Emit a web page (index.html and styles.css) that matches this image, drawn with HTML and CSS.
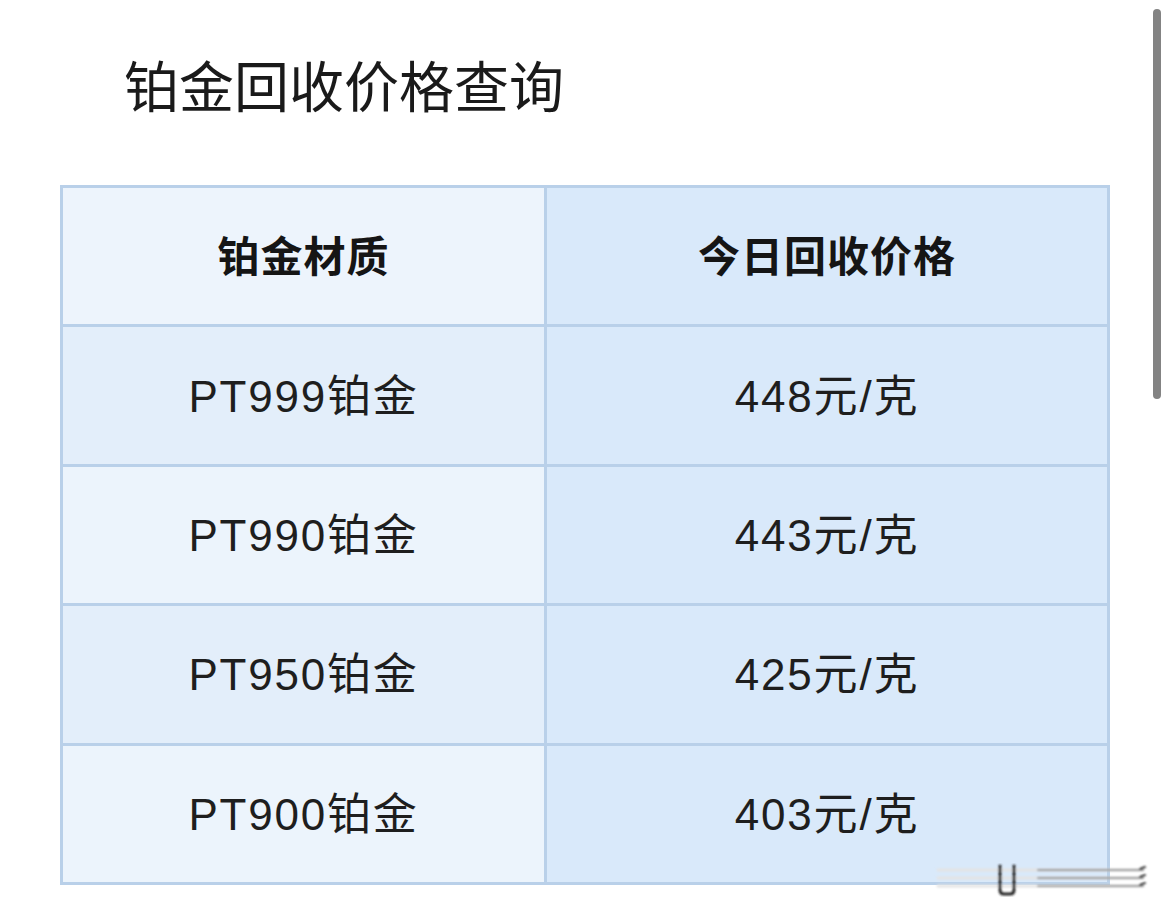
FILE: index.html
```html
<!DOCTYPE html>
<html lang="zh-CN">
<head>
<meta charset="utf-8">
<title>铂金回收价格查询</title>
<link rel="stylesheet" href="styles.css">
</head>
<body>
<div class="page">
  <h1 class="title">铂金回收价格查询</h1>
  <div class="table">
    <div class="cell head left">铂金材质</div>
    <div class="cell head right">今日回收价格</div>
    <div class="cell left odd">PT999铂金</div>
    <div class="cell right">448元/克</div>
    <div class="cell left even">PT990铂金</div>
    <div class="cell right">443元/克</div>
    <div class="cell left odd">PT950铂金</div>
    <div class="cell right">425元/克</div>
    <div class="cell left even">PT900铂金</div>
    <div class="cell right">403元/克</div>
  </div>
</div>
<div class="scrollbar"></div>
<svg class="watermark" width="230" height="50" viewBox="0 0 230 50">
  <defs><filter id="b"><feGaussianBlur stdDeviation="1.2"/></filter></defs>
  <g filter="url(#b)" fill="none" stroke-linecap="round">
    <path d="M10 12 H215 M10 20 H215 M10 28 H215" stroke="#e4e4e4" stroke-width="3"/>
    <path d="M110 12 H215 M110 20 H215 M110 28 H215" stroke="#9a9a9a" stroke-width="2"/>
    <path d="M72 8 V32 Q72 36 76 36 H82 Q86 36 86 32 V8" stroke="#222" stroke-width="3"/>
    <path d="M212 11 l5 -2 M212 19 l5 -2 M212 27 l5 -2" stroke="#333" stroke-width="2"/>
  </g>
</svg>
</body>
</html>
```

FILE: styles.css
```css
html, body {
  margin: 0;
  padding: 0;
  background: #ffffff;
}

body {
  font-family: "Liberation Sans", "Noto Sans CJK SC", sans-serif;
  color: #1c1c1c;
  width: 1170px;
  height: 923px;
  overflow: hidden;
  position: relative;
}

.page {
  padding-top: 48px;
}

.title {
  margin: 0 0 67px 0;
  padding-left: 124px;
  height: 70px;
  line-height: 70px;
  font-size: 55px;
  font-weight: 400;
  font-family: "Noto Sans CJK SC", sans-serif;
  color: #1a1a1a;
}

.table {
  margin-left: 60px;
  width: 1050px;
  box-sizing: border-box;
  display: grid;
  grid-template-columns: 481px 560px;
  grid-auto-rows: 136.4px;
  gap: 3px;
  padding: 3px;
  background: #b9d0e9;
}

.cell {
  display: flex;
  align-items: center;
  justify-content: center;
  font-size: 44px;
  letter-spacing: 1.8px;
  padding-bottom: 6px;
  color: #1e1e1e;
}

.head {
  font-family: "Noto Sans CJK SC", sans-serif;
  font-weight: 700;
  font-size: 42px;
  letter-spacing: 1px;
  color: #151515;
}

.left { background: #edf4fc; }
.left.odd { background: #e3eefa; }
.left.even { background: #ecf4fc; }
.right { background: #d9e9fa; }

.scrollbar {
  position: absolute;
  left: 1153px;
  top: 9px;
  width: 8px;
  height: 390px;
  border-radius: 4px;
  background: #838383;
}

.watermark {
  position: absolute;
  left: 928px;
  top: 858px;
}
```
